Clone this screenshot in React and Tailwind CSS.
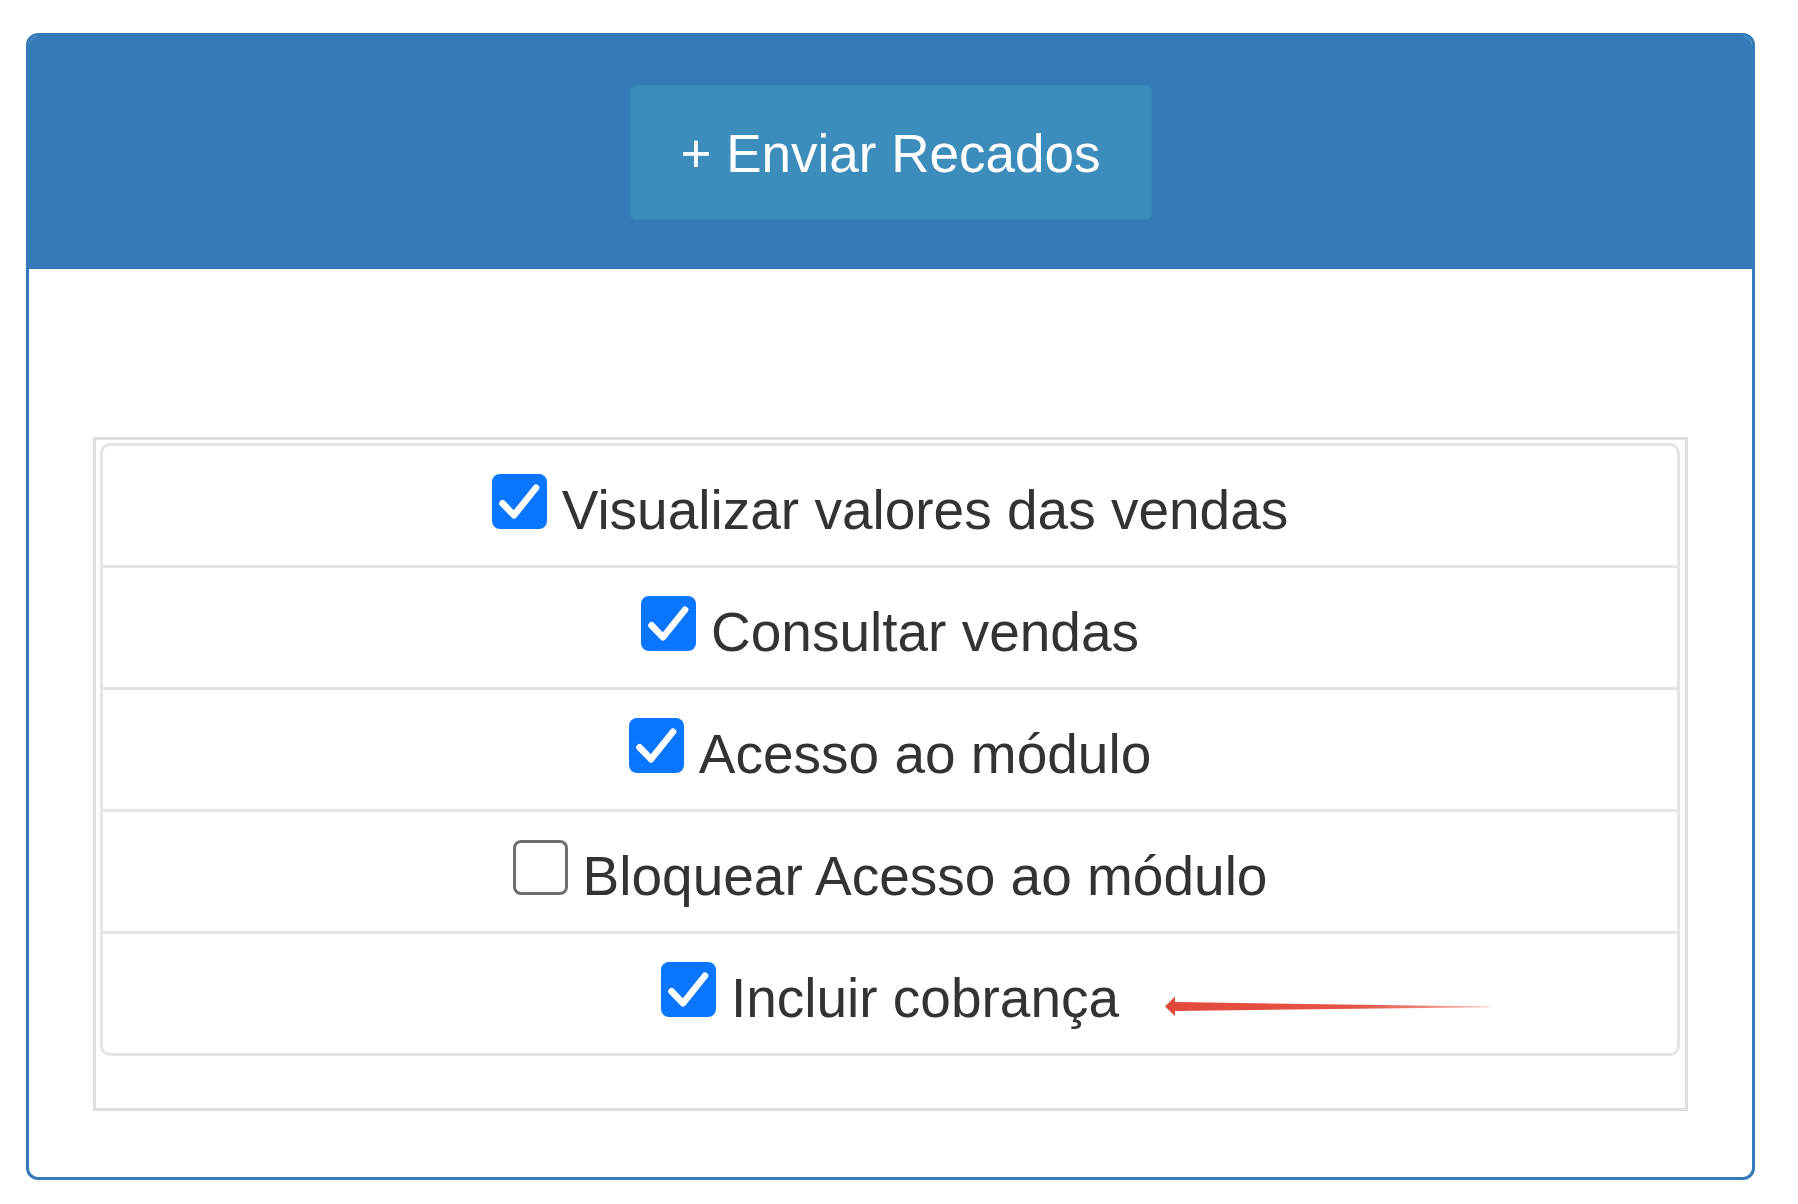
import React from "react";

const items = [
  { label: "Visualizar valores das vendas", checked: true },
  { label: "Consultar vendas", checked: true },
  { label: "Acesso ao módulo", checked: true },
  { label: "Bloquear Acesso ao módulo", checked: false },
  { label: "Incluir cobrança", checked: true, arrow: true },
];

function Box({ checked }) {
  if (checked) {
    return (
      <span className="flex h-[55px] w-[55px] shrink-0 items-center justify-center rounded-[8px] bg-[#0a75ff]">
        <svg viewBox="0 0 24 24" className="h-[55px] w-[55px]" fill="none">
          <path d="M4.6 12.8 L9.6 18 L19.2 6" stroke="#ffffff" strokeWidth="2.9" strokeLinecap="round" strokeLinejoin="round" />
        </svg>
      </span>
    );
  }
  return <span className="block h-[55px] w-[55px] shrink-0 rounded-[8px] border-[3px] border-[#6f6f6f] bg-white" />;
}

export default function App() {
  return (
    <div className="min-h-[1204px] w-[1798px] bg-white pl-[26px] pt-[33px]" style={{ fontFamily: '"Liberation Sans", Arial, sans-serif' }}>
      <div className="w-[1729px] overflow-hidden rounded-[12px] border-[3px] border-[#337ab7] bg-white">
        <div className="flex h-[233px] items-center justify-center bg-[#337ab7]">
          <button className="h-[135px] w-[522px] rounded-[6px] border-[2px] border-[#3988b8] bg-[#3c8dbc] pt-[2px] text-[53px] leading-none text-white">
            + Enviar Recados
          </button>
        </div>
        <div className="px-[64px] pb-[66px] pt-[168px]">
          <div className="border-[3px] border-[#dedede] pb-[52px] pl-[4px] pr-[5px] pt-[3px]">
            <div className="overflow-hidden rounded-[10px] border-[3px] border-[#e4e4e4]">
              {items.map((it, i) => (
                <div
                  key={it.label}
                  className={
                    "relative flex items-center justify-center" +
                    (i > 0 ? " h-[122px] border-t-[3px] border-[#e4e4e4]" : " h-[119px]")
                  }
                >
                  <div className="flex items-baseline gap-[15px]">
                    <Box checked={it.checked} />
                    <span className="text-[55px] leading-none text-[#333333]">{it.label}</span>
                  </div>
                  {it.arrow && (
                    <svg className="absolute left-[1060px] top-[60px] h-[24px] w-[330px]" viewBox="0 0 330 24">
                      <defs>
                        <linearGradient id="ag" x1="0" y1="0" x2="1" y2="0">
                          <stop offset="0" stopColor="#e2483a" />
                          <stop offset="0.6" stopColor="#e65546" />
                          <stop offset="1" stopColor="#f6b5ab" />
                        </linearGradient>
                      </defs>
                      <path d="M2 12.5 L12 2.5 L12 8 L326 12.6 L326 13.2 L12 17 L12 22 Z" fill="url(#ag)" />
                    </svg>
                  )}
                </div>
              ))}
            </div>
          </div>
        </div>
      </div>
    </div>
  );
}
